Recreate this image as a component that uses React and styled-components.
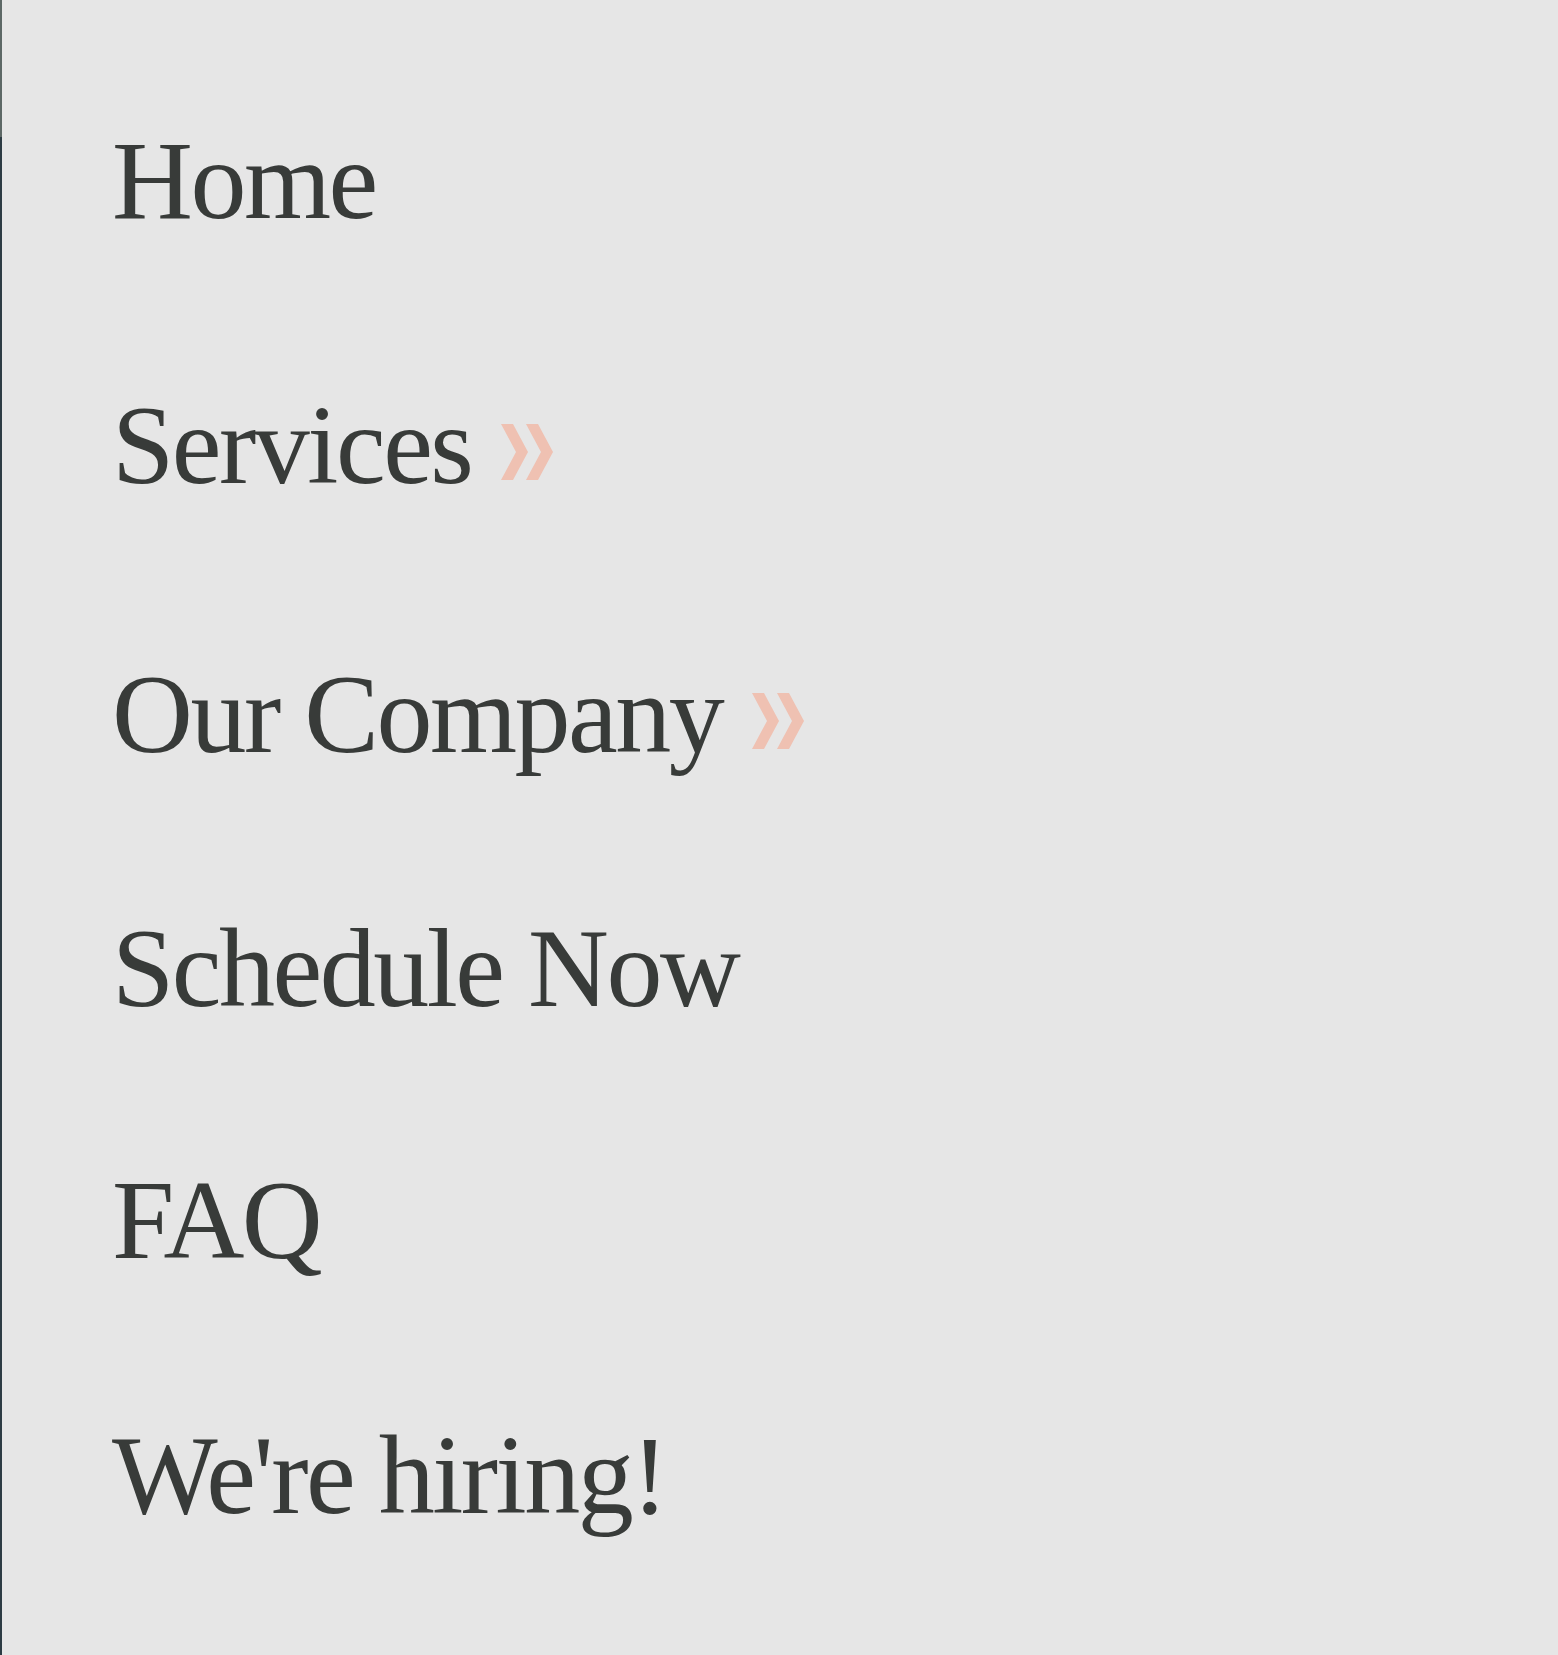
import styled, { createGlobalStyle } from "styled-components";

const GlobalStyle = createGlobalStyle`
  html, body {
    margin: 0;
    padding: 0;
    background: #e6e6e6;
  }
`;

const Drawer = styled.div`
  width: 100vw;
  min-height: 1655px;
  display: flex;
  background: #e6e6e6;
`;

const Rail = styled.div`
  width: 2px;
  display: flex;
  flex-flow: column;
  flex-shrink: 0;
`;

const RailPart = styled.div`
  background: ${(p) => p.$color};
  height: ${(p) => (p.$height ? `${p.$height}px` : "auto")};
  flex: ${(p) => (p.$height ? "0 0 auto" : "1")};
`;

const Menu = styled.nav`
  display: flex;
  flex-flow: column;
  align-items: flex-start;
  padding: 120px 0 0 110px;
`;

const MenuItem = styled.a`
  display: flex;
  align-items: baseline;
  margin-top: ${(p) => p.$space}px;
  height: 120px;
  line-height: 120px;
  font-family: "Liberation Serif", "Times New Roman", serif;
  font-size: 112px;
  font-weight: 400;
  letter-spacing: -2.5px;
  color: #383b39;
  text-decoration: none;
  white-space: nowrap;
`;

const Chevron = styled.svg`
  width: 52px;
  height: 56px;
  margin-left: 30px;
  position: relative;
  top: -3px;
  align-self: baseline;
`;

const DoubleChevron = () => (
  <Chevron viewBox="0 0 52 56">
    <polygon points="0,0 12,0 27,28 12,56 0,56 15,28" fill="#efc1b2" />
    <polygon points="25,0 37,0 52,28 37,56 25,56 40,28" fill="#efc1b2" />
  </Chevron>
);

const items = [
  { label: "Home", space: 0 },
  { label: "Services", space: 145, more: true },
  { label: "Our Company", space: 149, more: true },
  { label: "Schedule Now", space: 134 },
  { label: "FAQ", space: 132 },
  { label: "We're hiring!", space: 135 },
];

export default function App() {
  return (
    <>
      <GlobalStyle />
      <Drawer>
        <Rail>
          <RailPart $color="#5d6866" $height={137} />
          <RailPart $color="#2d3c44" />
        </Rail>
        <Menu>
          {items.map((item) => (
            <MenuItem key={item.label} $space={item.space}>
              {item.label}
              {item.more && <DoubleChevron />}
            </MenuItem>
          ))}
        </Menu>
      </Drawer>
    </>
  );
}
